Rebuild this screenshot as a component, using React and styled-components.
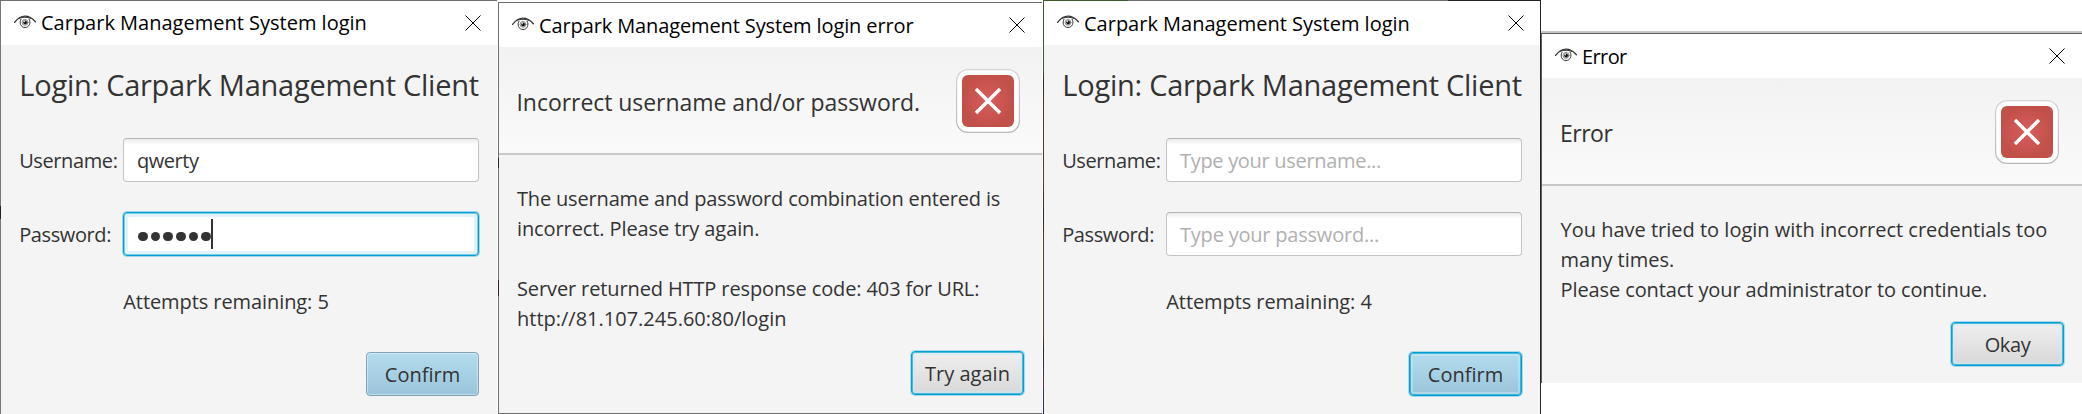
import React from 'react';
import styled, { createGlobalStyle, css } from 'styled-components';

const GlobalStyle = createGlobalStyle`
  *, *::before, *::after { box-sizing: border-box; }
  body { margin: 0; background: #fff; }
`;

const Desktop = styled.main`
  display: flex;
  align-items: flex-start;
  width: 2082px;
  height: 414px;
  overflow: hidden;
  background: #fff;
  color: #333;
  font: 20px/30px "Open Sans", "Noto Sans", sans-serif;
`;

const edges = {
  first: css`
    padding: 1px 1px 0 1px;
    background:
      linear-gradient(#fff, #fff) right / 1px 100% no-repeat,
      linear-gradient(#6e6e6e, #6e6e6e) top / 100% 1px no-repeat,
      linear-gradient(#777 0 206px, #222 206px 219px, #777 219px) left / 1px 100% no-repeat;
  `,
  second: css`
    margin-top: 2px;
    padding: 1px 0 1px 1px;
    background:
      linear-gradient(#6e6e6e, #6e6e6e) top / 100% 1px no-repeat,
      linear-gradient(#6e6e6e, #6e6e6e) bottom / 100% 1px no-repeat,
      linear-gradient(#6e6e6e 0 156px, #222 156px 166px, #6e6e6e 166px 278px, #322 278px 294px, #6e6e6e 294px) left / 1px 100% no-repeat;
  `,
  third: css`
    padding: 1px 1px 0 1px;
    background:
      linear-gradient(90deg, #3f5a2a 0 85px, #6e6e6e 85px 405px, #222 405px) top / 100% 1px no-repeat,
      linear-gradient(#22252b, #22252b) right / 1px 100% no-repeat,
      linear-gradient(#3f5a2a 0 70px, #1f2820 82px, #4d3420 100px, #5c3a1a 180px, #2a2622 215px, #5c3a1a 240px, #5c3a1a 335px, #222 352px, #2a2f55 365px, #6b2f3a 384px, #2c3560 392px) left / 1px 100% no-repeat;
  `,
  fourth: css`
    margin-top: 31px;
    padding: 3px 0 0 1px;
    background:
      linear-gradient(#c6c6c6 0 2px, #5f5f5f 2px 3px) top / 100% 3px no-repeat,
      linear-gradient(#5f5f5f, #5f5f5f) left / 1px 100% no-repeat;
  `,
};

const Window = styled.section`
  flex: none;
  display: flex;
  flex-direction: column;
  width: ${(p) => p.$width}px;
  height: ${(p) => p.$height}px;
  margin-right: ${(p) => p.$after || 0}px;
  ${(p) => edges[p.$edge]}
`;

const TitleBar = styled.header`
  flex: none;
  display: flex;
  align-items: center;
  height: 44px;
  padding: 0 ${(p) => p.$right}px 0 12.5px;
  background: #fff;
  color: #000;
`;

const Title = styled.h1`
  flex: 1;
  margin: 0 0 0 5.5px;
  padding-top: ${(p) => (p.$raised ? 0 : 2)}px;
  font: inherit;
  white-space: nowrap;
  letter-spacing: ${(p) => p.$track || 0}px;
`;

const EyeSvg = styled.svg`
  flex: none;
  width: 22px;
  height: 14px;
  margin-bottom: 2px;
`;

const CloseSvg = styled.svg`
  flex: none;
  width: 16px;
  height: 16px;
`;

const LoginForm = styled.div`
  flex: 1;
  padding: 20px 18px 0 17.5px;
  background: #f4f4f4;
`;

const Heading = styled.h2`
  margin: 0 0 33px 0.8px;
  font-size: 29px;
  font-weight: 400;
  line-height: 40px;
  letter-spacing: -0.25px;
  white-space: nowrap;
`;

const FieldRow = styled.div`
  display: grid;
  grid-template-columns: 104.5px 1fr;
  align-items: center;
  height: 44px;
  margin-bottom: 30px;
`;

const Label = styled.span`
  padding: 2px 0 0 0.7px;
  letter-spacing: -0.4px;
`;

const Field = styled.div`
  display: flex;
  align-items: center;
  height: 44px;
  padding: 2px 13px 0;
  border: 1px solid #c4c4c4;
  border-top-color: #b4b4b4;
  border-radius: 4px;
  background: linear-gradient(#ececec, #fff 6px);
  color: ${(p) => (p.$hint ? '#b0b0b0' : '#333')};
  letter-spacing: ${(p) => p.$track || 0}px;
  ${(p) =>
    p.$focused &&
    css`
      padding-top: 0;
      border-color: #039ed3;
      background: #fff;
      box-shadow: 0 0 0 1px rgba(3, 158, 211, 0.35), inset 0 0 0 1px rgba(3, 158, 211, 0.45), inset 0 0 0 4px #e2f3fa;
    `}
`;

const Dots = styled.span`
  display: flex;
  gap: 3.1px;
  margin: 5px 0 0 1px;
`;

const Dot = styled.i`
  width: 9.6px;
  height: 9.6px;
  border-radius: 50%;
  background: #333;
`;

const Caret = styled.i`
  width: 1.5px;
  height: 30px;
  margin-left: 0.4px;
  background: #333;
`;

const Attempts = styled.p`
  margin: 0 0 35px 104.8px;
  padding-top: 1px;
  letter-spacing: -0.08px;
`;

const Actions = styled.div`
  display: flex;
  justify-content: flex-end;
`;

const Button = styled.button`
  width: 113px;
  height: 44px;
  padding: 2px 0 0;
  border: 1px solid #7fa3b5;
  border-radius: 4px;
  background: ${(p) => (p.$primary ? 'linear-gradient(#b3ddee, #9ac4d9)' : 'linear-gradient(#efefef, #d8d8d8)')};
  box-shadow: inset 0 0 0 1px rgba(255, 255, 255, 0.4);
  color: #333;
  font: inherit;
  letter-spacing: ${(p) => p.$track || 0}px;
  font-variant-ligatures: none;
  ${(p) =>
    p.$focused &&
    css`
      border-color: #039ed3;
      box-shadow: 0 0 0 1px rgba(3, 158, 211, 0.3), inset 0 0 0 1px rgba(3, 158, 211, 0.65), inset 0 0 0 3px rgba(200, 238, 248, 0.45);
    `}
`;

const AlertHeader = styled.div`
  flex: none;
  display: flex;
  align-items: center;
  justify-content: space-between;
  height: 108px;
  padding: 2px ${(p) => p.$right}px 0 ${(p) => p.$left}px;
  border-bottom: 2px solid #c8c8c8;
  background: linear-gradient(#f2f2f2, #fafafa);
`;

const AlertTitle = styled.h2`
  margin: 0;
  padding-top: 2px;
  font-size: 23px;
  font-weight: 400;
  letter-spacing: ${(p) => p.$track}px;
`;

const AlertBody = styled.div`
  flex: 1;
  padding: 29px 18px 0 ${(p) => p.$left}px;
  background: #f4f4f4;
`;

const Message = styled.div`
  margin-bottom: 17px;
`;

const Line = styled.p`
  min-height: 30px;
  margin: 0;
  white-space: nowrap;
  letter-spacing: ${(p) => p.$track || 0}px;
`;

const BadgeSvg = styled.svg`
  flex: none;
  width: 64px;
  height: 64px;
`;

const Eye = () => (
  <EyeSvg viewBox="0 0 22 14" fill="none" stroke="#333" strokeLinecap="round">
    <path d="M.6 7.4C3.8 3.4 7.4 1.2 11 1.2s7.4 2.2 10.4 5.6" strokeWidth="1.3" />
    <path d="M5.6 3.1C8.6 1.9 13.4 1.9 16.8 3.3" strokeWidth="1" />
    <path d="M7 4.2C4.9 7.6 6.6 12.5 11 12.5s6.2-4.9 4.1-8.3" strokeWidth="1" />
    <circle cx="11" cy="7.4" r="2.9" stroke="#555" strokeWidth=".7" />
    <circle cx="11.1" cy="7.5" r="1.9" fill="#111" stroke="none" />
    <circle cx="10.4" cy="6.7" r=".6" fill="#fff" stroke="none" />
  </EyeSvg>
);

const Close = () => (
  <CloseSvg viewBox="0 0 16 16" stroke="#000" strokeWidth="1">
    <path d="M.5 .5l15 15M15.5 .5l-15 15" />
  </CloseSvg>
);

const ErrorBadge = () => (
  <BadgeSvg viewBox="0 0 64 64">
    <defs>
      <radialGradient id="badge-red">
        <stop offset="0" stopColor="#d95c5c" />
        <stop offset="1" stopColor="#c15049" />
      </radialGradient>
      <linearGradient id="badge-rim" x2="0" y2="1">
        <stop offset="0" stopColor="#d4d4d4" />
        <stop offset="1" stopColor="#b8b8b8" />
      </linearGradient>
    </defs>
    <rect x=".6" y=".6" width="62.8" height="62.8" rx="11.5" fill="#fff" stroke="url(#badge-rim)" strokeWidth="1.2" />
    <rect x="6" y="6" width="52" height="52" rx="6" fill="url(#badge-red)" />
    <path d="M20 20l24 24M44 20L20 44" stroke="#fff" strokeWidth="3.4" />
  </BadgeSvg>
);

const TitleRow = ({ text, track, right, raised }) => (
  <TitleBar $right={right}>
    <Eye />
    <Title $track={track} $raised={raised}>{text}</Title>
    <Close />
  </TitleBar>
);

export default function App() {
  return (
    <>
      <GlobalStyle />
      <Desktop>
        <Window $edge="first" $width={498} $height={414}>
          <TitleRow text="Carpark Management System login" right={16.5} raised />
          <LoginForm>
            <Heading>Login: Carpark Management Client</Heading>
            <FieldRow>
              <Label>Username:</Label>
              <Field $track={-0.45}>qwerty</Field>
            </FieldRow>
            <FieldRow>
              <Label>Password:</Label>
              <Field $focused>
                <Dots>
                  {[0, 1, 2, 3, 4, 5].map((n) => (
                    <Dot key={n} />
                  ))}
                </Dots>
                <Caret />
              </Field>
            </FieldRow>
            <Attempts>Attempts remaining: 5</Attempts>
            <Actions>
              <Button $primary>Confirm</Button>
            </Actions>
          </LoginForm>
        </Window>

        <Window $edge="second" $width={544} $height={412} $after={1}>
          <TitleRow text="Carpark Management System login error" track={-0.117} right={17} />
          <AlertHeader $left={17.5} $right={22}>
            <AlertTitle $track={-0.05}>Incorrect username and/or password.</AlertTitle>
            <ErrorBadge />
          </AlertHeader>
          <AlertBody $left={18}>
            <Message>
              <Line $track={-0.17}>The username and password combination entered is</Line>
              <Line $track={-0.1}>incorrect. Please try again.</Line>
              <Line />
              <Line $track={-0.12}>Server returned HTTP response code: 403 for URL:</Line>
              <Line>http://81.107.245.60:80/login</Line>
            </Message>
            <Actions>
              <Button $focused>Try again</Button>
            </Actions>
          </AlertBody>
        </Window>

        <Window $edge="third" $width={498} $height={414}>
          <TitleRow text="Carpark Management System login" right={16.5} />
          <LoginForm>
            <Heading>Login: Carpark Management Client</Heading>
            <FieldRow>
              <Label>Username:</Label>
              <Field $hint $track={-0.31}>Type your username...</Field>
            </FieldRow>
            <FieldRow>
              <Label>Password:</Label>
              <Field $hint $track={-0.21}>Type your password...</Field>
            </FieldRow>
            <Attempts>Attempts remaining: 4</Attempts>
            <Actions>
              <Button $primary $focused>Confirm</Button>
            </Actions>
          </LoginForm>
        </Window>

        <Window $edge="fourth" $width={541} $height={352}>
          <TitleRow text="Error" track={-0.6} right={17} />
          <AlertHeader $left={18} $right={23}>
            <AlertTitle $track={-0.5}>Error</AlertTitle>
            <ErrorBadge />
          </AlertHeader>
          <AlertBody $left={18.5}>
            <Message>
              <Line>You have tried to login with incorrect credentials too</Line>
              <Line>many times.</Line>
              <Line $track={-0.1}>Please contact your administrator to continue.</Line>
            </Message>
            <Actions>
              <Button $focused $track={-0.4}>Okay</Button>
            </Actions>
          </AlertBody>
        </Window>
      </Desktop>
    </>
  );
}
